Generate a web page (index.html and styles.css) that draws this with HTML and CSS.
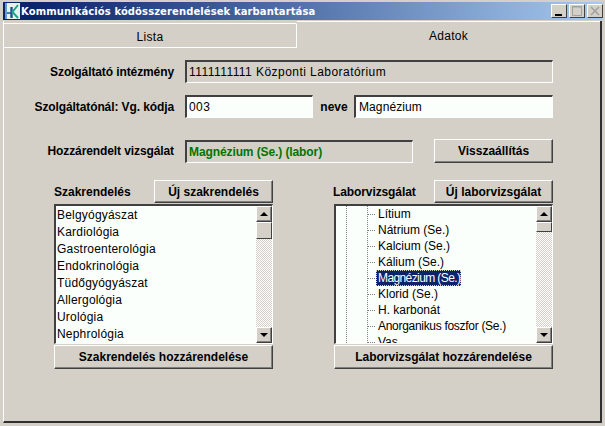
FILE: index.html
```html
<!DOCTYPE html>
<html lang="hu">
<head>
<meta charset="utf-8">
<title>Kommunikációs kódösszerendelések karbantartása</title>
<link rel="stylesheet" href="styles.css">
</head>
<body>
<div class="window">
  <div class="titlebar">
    <svg class="logo" width="15" height="16" viewBox="0 0 15 16">
      <rect width="15" height="16" fill="#e4f3ec"/>
      <path d="M0 0h2v16H0z" fill="#5f9fd0"/>
      <path d="M6.500 4v11" stroke="#1d4f96" stroke-width="2.400" fill="none"/>
      <path d="M13 2 7.500 9l5.500 6" stroke="#1fa58a" stroke-width="2" fill="none"/>
      <path d="M2 10h4" stroke="#1d4f96" stroke-width="1.500" fill="none"/>
    </svg>
    <span class="title">Kommunikációs kódösszerendelések karbantartása</span>
    <div class="winbtns">
      <span class="winbtn"><svg width="14" height="12" viewBox="0 0 14 12"><path d="M3 9h7v2H3z" fill="#000"/></svg></span>
      <span class="winbtn"><svg width="14" height="12" viewBox="0 0 14 12"><path d="M2.500 1.500h9v9h-9z" fill="none" stroke="#a0a0a0"/><path d="M2 2h10" stroke="#a0a0a0"/></svg></span>
      <span class="winbtn winbtn-close"><svg width="14" height="12" viewBox="0 0 14 12"><path d="M3 2l8 8M11 2l-8 8" stroke="#a0a0a0" stroke-width="1.600" fill="none"/></svg></span>
    </div>
  </div>
  <div class="tabpane">
    <div class="tabs">
      <div class="tab tab-idle">Lista</div>
      <div class="tab tab-active">Adatok</div>
    </div>
    <div class="form">
      <div class="row row-inst">
        <label class="lbl">Szolgáltató intézmény</label>
        <div class="field field-ro field-inst">1111111111 Központi Laboratórium</div>
      </div>
      <div class="row row-code">
        <label class="lbl">Szolgáltatónál: Vg. kódja</label>
        <div class="field field-edit field-code">003</div>
        <label class="lbl-neve">neve</label>
        <div class="field field-edit field-name">Magnézium</div>
      </div>
      <div class="row row-assigned">
        <label class="lbl">Hozzárendelt vizsgálat</label>
        <div class="field field-ro field-assigned">Magnézium (Se.) (labor)</div>
        <button class="btn btn-reset">Visszaállítás</button>
      </div>
      <div class="columns">
        <section class="col">
          <div class="colhead">
            <span class="coltitle">Szakrendelés</span>
            <button class="btn btn-new">Új szakrendelés</button>
          </div>
          <div class="listbox">
            <ul class="items">
              <li>Belgyógyászat</li>
              <li>Kardiológia</li>
              <li>Gastroenterológia</li>
              <li>Endokrinológia</li>
              <li>Tüdőgyógyászat</li>
              <li>Allergológia</li>
              <li>Urológia</li>
              <li>Nephrológia</li>
            </ul>
            <div class="scrollbar">
              <span class="sbtn"><i class="arrow-up"></i></span>
              <span class="thumb thumb-list"></span>
              <span class="track"></span>
              <span class="sbtn"><i class="arrow-down"></i></span>
            </div>
          </div>
          <button class="btn btn-wide">Szakrendelés hozzárendelése</button>
        </section>
        <section class="col">
          <div class="colhead">
            <span class="coltitle coltitle-labor">Laborvizsgálat</span>
            <button class="btn btn-new">Új laborvizsgálat</button>
          </div>
          <div class="listbox">
            <div class="tree">
              <i class="guide guide-1"></i>
              <i class="guide guide-2"></i>
              <ul class="nodes">
                <li><span>Lítium</span></li>
                <li><span>Nátrium (Se.)</span></li>
                <li><span>Kalcium (Se.)</span></li>
                <li><span>Kálium (Se.)</span></li>
                <li><span class="selected">Magnézium (Se.)</span></li>
                <li><span>Klorid (Se.)</span></li>
                <li><span>H. karbonát</span></li>
                <li><span class="long">Anorganikus foszfor (Se.)</span></li>
                <li><span>Vas</span></li>
              </ul>
            </div>
            <div class="scrollbar">
              <span class="sbtn"><i class="arrow-up"></i></span>
              <span class="thumb thumb-tree"></span>
              <span class="track"></span>
              <span class="sbtn"><i class="arrow-down"></i></span>
            </div>
          </div>
          <button class="btn btn-wide">Laborvizsgálat hozzárendelése</button>
        </section>
      </div>
    </div>
  </div>
</div>
</body>
</html>
```
FILE: styles.css
```css
* { box-sizing: border-box; }
html, body { margin: 0; padding: 0; }
body {
  width: 605px;
  height: 426px;
  overflow: hidden;
  background: #d4d0c8;
  font-family: "Liberation Sans", Arial, sans-serif;
  font-size: 12px;
  color: #000;
}
.window {
  width: 605px;
  height: 426px;
  padding: 2px 0 0 0;
  display: flex;
  flex-direction: column;
}
.titlebar {
  height: 18px;
  margin-left: 3px;
  margin-right: 2px;
  display: flex;
  align-items: center;
  background: linear-gradient(90deg, #0a246a 0%, #0a246a 5%, #a6caf0 100%);
  flex: none;
}
.logo { flex: none; margin-left: 2px; }
.title {
  margin-left: 1px;
  color: #fff;
  font-family: "DejaVu Sans", sans-serif;
  font-weight: bold;
  font-size: 10px;
  letter-spacing: 0.1px;
  white-space: nowrap;
}
.winbtns { margin-left: auto; display: flex; gap: 2px; }
.winbtn {
  width: 16px;
  height: 14px;
  background: #d4d0c8;
  border: 1px solid;
  border-color: #fff #404040 #404040 #fff;
  display: flex;
}
.winbtn svg { display: block; }
.tabpane {
  margin: 1px 3px 0 3px;
  height: 402px;
  display: flex;
  flex-direction: column;
  border-left: 1px solid #fff;
  border-right: 2px solid #303030;
  border-bottom: 2px solid #303030;
  flex: none;
  width: 599px;
}
.tabs { display: flex; height: 27px; flex: none; }
.tab {
  text-align: center;
  letter-spacing: 0.3px;
}
.tab-idle {
  width: 293px;
  margin-top: 2px;
  padding-top: 6px;
  border-top: 1px solid #fff;
  border-right: 1px solid #fff;
  border-bottom: 1px solid #fff;
  border-top-right-radius: 2px;
}
.tab-active {
  flex: 1;
  padding-top: 7px;
  border-top: 1px solid #fff;
}
.form { padding: 12px 0 0 26px; }
.row { display: flex; align-items: center; }
.lbl {
  width: 144px;
  text-align: right;
  font-weight: bold;
  letter-spacing: -0.1px;
  white-space: nowrap;
  margin-right: 11px;
}
.row-code { margin-top: 12px; }
.row-assigned { margin-top: 21px; }
.field {
  height: 23px;
  padding: 3px 0 0 2px;
  line-height: 15px;
  border-style: solid;
  border-width: 2px 1px 1px 2px;
  border-color: #404040 #fff #fff #404040;
  letter-spacing: 0.45px;
  white-space: nowrap;
}
.field-ro { background: #d4d0c8; }
.field-edit { background: #fbfffb; }
.field-inst { width: 368px; }
.field-code { width: 128px; }
.lbl-neve { width: 41px; padding-left: 1px; text-align: center; font-weight: bold; }
.field-name { width: 199px; padding-left: 3px; letter-spacing: 0.1px; }
.field-assigned {
  width: 228px;
  color: #007400;
  font-weight: bold;
  letter-spacing: -0.1px;
}
.btn {
  display: block;
  padding: 0;
  font-family: inherit;
  font-size: 12px;
  font-weight: bold;
  color: #000;
  background: #d4d0c8;
  border: 1px solid;
  border-color: #fff #404040 #404040 #fff;
  box-shadow: inset -1px -1px 0 #808080;
  border-radius: 0;
}
.btn-reset { width: 119px; height: 24px; margin-left: 21px; }
.columns { display: flex; gap: 61px; margin: 17px 0 0 24px; }
.col { width: 219px; }
.colhead {
  height: 23px;
  display: flex;
  align-items: center;
  justify-content: space-between;
}
.coltitle { font-weight: bold; }
.coltitle-labor { margin-left: -1px; letter-spacing: -0.1px; }
.btn-new { width: 119px; height: 23px; }
.btn-wide { width: 219px; height: 24px; margin-top: 1px; }
.listbox {
  margin-top: 1px;
  height: 140px;
  display: flex;
  overflow: hidden;
  background: #fbfffb;
  border-style: solid;
  border-width: 2px 1px 1px 2px;
  border-color: #404040 #fff #fff #404040;
}
.items {
  list-style: none;
  margin: 0;
  padding: 1px 0 0 1px;
  flex: 1;
  letter-spacing: 0.2px;
}
.items li { height: 17px; line-height: 17px; white-space: nowrap; }
.scrollbar {
  width: 16px;
  flex: none;
  display: flex;
  flex-direction: column;
}
.sbtn {
  height: 16px;
  flex: none;
  display: flex;
  align-items: center;
  justify-content: center;
  background: #d4d0c8;
  border: 1px solid;
  border-color: #fff #404040 #404040 #fff;
  box-shadow: inset -1px -1px 0 #808080;
}
.arrow-up, .arrow-down {
  width: 0;
  height: 0;
  border-left: 4px solid transparent;
  border-right: 4px solid transparent;
}
.arrow-up { border-bottom: 4px solid #000; }
.arrow-down { border-top: 4px solid #000; }
.thumb {
  flex: none;
  background: #d4d0c8;
  border: 1px solid;
  border-color: #fff #404040 #404040 #fff;
}
.thumb-list { height: 17px; }
.thumb-tree { height: 10px; }
.track {
  flex: 1;
  background: repeating-conic-gradient(#d4d0c8 0 25%, #fff 0 50%) 0 0 / 2px 2px;
}
.tree {
  flex: 1;
  position: relative;
  overflow: hidden;
}
.guide {
  position: absolute;
  top: 0;
  bottom: 0;
  border-left: 1px dotted #808080;
}
.guide-1 { left: 10px; }
.guide-2 { left: 31px; }
.nodes { list-style: none; margin: 0; padding: 0 0 0 31px; }
.nodes li {
  height: 16px;
  line-height: 16px;
  padding-left: 10px;
  position: relative;
  white-space: nowrap;
}
.nodes li::before {
  content: "";
  position: absolute;
  left: 1px;
  top: 8px;
  width: 7px;
  border-top: 1px dotted #808080;
}
.nodes span { display: inline-block; height: 16px; padding: 0 1px 0 2px; margin-left: -1px; }
.nodes .long { letter-spacing: -0.3px; }
.nodes .selected {
  background: #0a246a;
  color: #fff;
  letter-spacing: -0.6px;
  outline: 1px dotted #d4d0c8;
  outline-offset: -1px;
}
```
